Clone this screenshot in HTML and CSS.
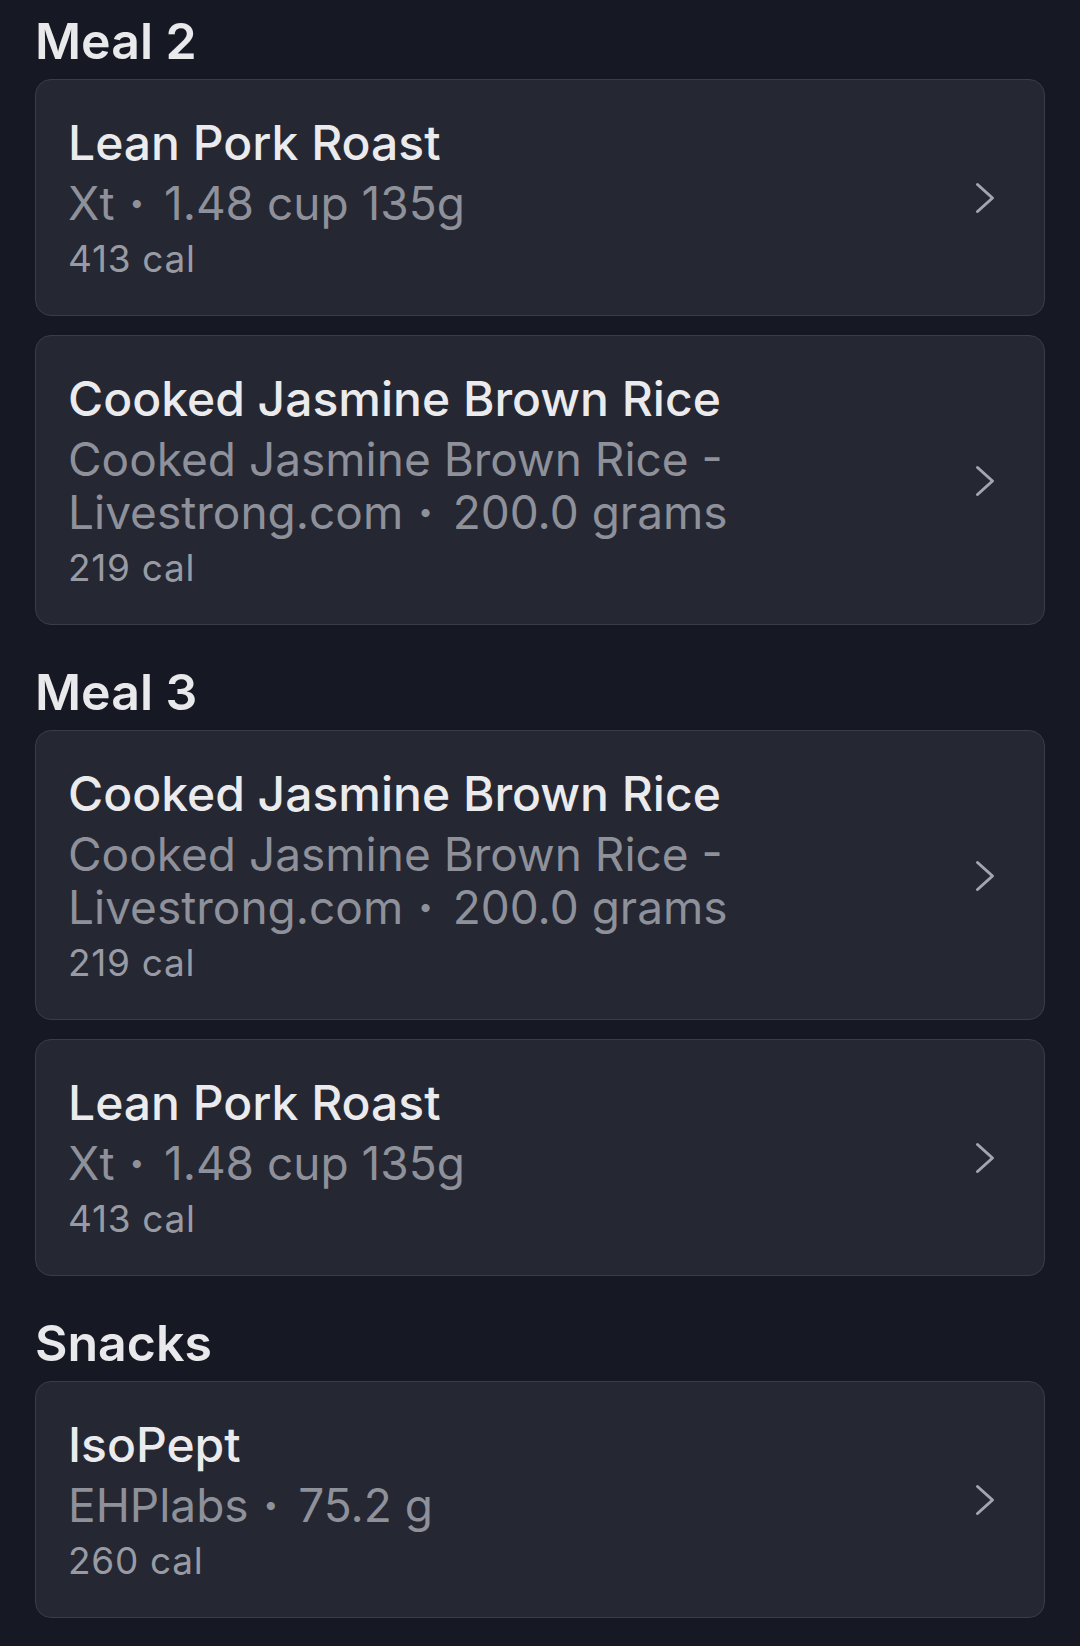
FILE: index.html
```html
<!DOCTYPE html>
<html lang="en">
<head>
<meta charset="utf-8">
<title>Food log</title>
<link rel="stylesheet" href="styles.css">
</head>
<body>
<main class="log">
  <section class="meal">
    <h2 class="meal-title">Meal 2</h2>
    <div class="entries">
      <a class="entry" href="#">
        <div class="entry-text">
          <div class="entry-name">Lean Pork Roast</div>
          <div class="entry-meta"><span class="src">Xt</span> <span class="sep">•</span> <span class="qty">1.48 cup 135g</span></div>
          <div class="entry-cal">413 cal</div>
        </div>
        <svg class="chevron" viewBox="0 0 22 34" aria-hidden="true"><path d="M3.5 3.5 L18.5 17 L3.5 30.5"/></svg>
      </a>
      <a class="entry" href="#">
        <div class="entry-text">
          <div class="entry-name">Cooked Jasmine Brown Rice</div>
          <div class="entry-meta"><span class="src">Cooked Jasmine Brown Rice -</span> <span class="src">Livestrong.com</span> <span class="sep">•</span> <span class="qty">200.0 grams</span></div>
          <div class="entry-cal">219 cal</div>
        </div>
        <svg class="chevron" viewBox="0 0 22 34" aria-hidden="true"><path d="M3.5 3.5 L18.5 17 L3.5 30.5"/></svg>
      </a>
    </div>
  </section>
  <section class="meal">
    <h2 class="meal-title">Meal 3</h2>
    <div class="entries">
      <a class="entry" href="#">
        <div class="entry-text">
          <div class="entry-name">Cooked Jasmine Brown Rice</div>
          <div class="entry-meta"><span class="src">Cooked Jasmine Brown Rice -</span> <span class="src">Livestrong.com</span> <span class="sep">•</span> <span class="qty">200.0 grams</span></div>
          <div class="entry-cal">219 cal</div>
        </div>
        <svg class="chevron" viewBox="0 0 22 34" aria-hidden="true"><path d="M3.5 3.5 L18.5 17 L3.5 30.5"/></svg>
      </a>
      <a class="entry" href="#">
        <div class="entry-text">
          <div class="entry-name">Lean Pork Roast</div>
          <div class="entry-meta"><span class="src">Xt</span> <span class="sep">•</span> <span class="qty">1.48 cup 135g</span></div>
          <div class="entry-cal">413 cal</div>
        </div>
        <svg class="chevron" viewBox="0 0 22 34" aria-hidden="true"><path d="M3.5 3.5 L18.5 17 L3.5 30.5"/></svg>
      </a>
    </div>
  </section>
  <section class="meal">
    <h2 class="meal-title">Snacks</h2>
    <div class="entries">
      <a class="entry" href="#">
        <div class="entry-text">
          <div class="entry-name">IsoPept</div>
          <div class="entry-meta"><span class="src">EHPlabs</span> <span class="sep">•</span> <span class="qty">75.2 g</span></div>
          <div class="entry-cal">260 cal</div>
        </div>
        <svg class="chevron" viewBox="0 0 22 34" aria-hidden="true"><path d="M3.5 3.5 L18.5 17 L3.5 30.5"/></svg>
      </a>
    </div>
  </section>
</main>
</body>
</html>
```

FILE: styles.css
```css
html, body {
  margin: 0;
  padding: 0;
  background: #161823;
}

body {
  font-family: Inter, "Noto Sans", "Liberation Sans", sans-serif;
  -webkit-font-smoothing: antialiased;
}

.log {
  display: flex;
  flex-direction: column;
  gap: 37px;
  padding: 11px 35px 0;
}

.meal-title {
  margin: 0 0 8px;
  font-size: 50px;
  line-height: 60px;
  font-weight: 600;
  color: #e9e9eb;
}

.entries {
  display: flex;
  flex-direction: column;
  gap: 19px;
}

.entry {
  display: flex;
  align-items: center;
  background: #252733;
  border: 1px solid #3a3d49;
  border-radius: 16px;
  padding: 33px 48px 32px 32px;
  text-decoration: none;
}

.entry-text {
  flex: 1;
  min-width: 0;
}

.entry-name {
  font-size: 48px;
  line-height: 60px;
  font-weight: 500;
  color: #ebebed;
}

.entry-meta {
  margin-top: 4px;
  font-size: 46px;
  line-height: 53px;
  font-weight: 400;
  color: #8e919a;
}

.qty {
  white-space: nowrap;
}

.sep {
  margin: 0 7px 0 2px;
  font-size: 26px;
  font-weight: 400;
  line-height: 0;
  vertical-align: 8px;
}

.entry-cal {
  margin-top: 5px;
  font-size: 37px;
  line-height: 48px;
  font-weight: 400;
  letter-spacing: 0.7px;
  color: #989ba4;
}

.chevron {
  flex: none;
  width: 22px;
  height: 34px;
  margin-left: 24px;
  fill: none;
  stroke: #a4a6af;
  stroke-width: 3;
  stroke-linecap: round;
  stroke-linejoin: round;
}
```
